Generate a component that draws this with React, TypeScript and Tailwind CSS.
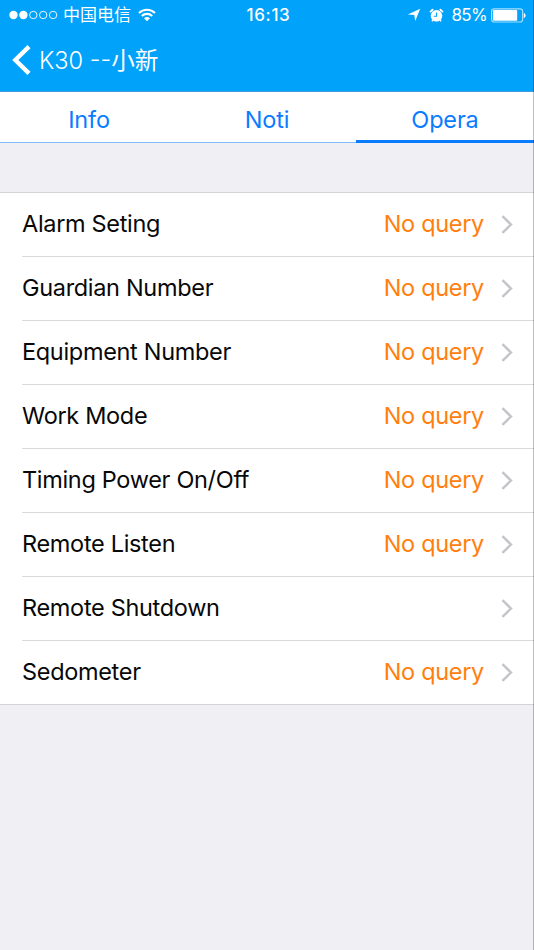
const rows = [
  { label: 'Alarm Seting', value: 'No query' },
  { label: 'Guardian Number', value: 'No query' },
  { label: 'Equipment Number', value: 'No query' },
  { label: 'Work Mode', value: 'No query' },
  { label: 'Timing Power On/Off', value: 'No query' },
  { label: 'Remote Listen', value: 'No query' },
  { label: 'Remote Shutdown', value: '' },
  { label: 'Sedometer', value: 'No query' },
];

const tabs = ['Info', 'Noti', 'Opera'];

function StatusBar() {
  return (
    <div className="grid h-[30px] grid-cols-[1fr_auto_1fr] items-center pl-[9px] pr-[8px]">
      <div className="flex items-center">
        <svg width="50" height="10" viewBox="0 0 50 10" fill="none" stroke="white">
          <circle cx="4.5" cy="5" r="4.2" fill="white" stroke="none" />
          <circle cx="14.4" cy="5" r="4.2" fill="white" stroke="none" />
          <circle cx="24.3" cy="5" r="3.7" strokeWidth="0.9" />
          <circle cx="34.2" cy="5" r="3.7" strokeWidth="0.9" />
          <circle cx="44.1" cy="5" r="3.7" strokeWidth="0.9" />
        </svg>
        <span className="ml-[4px] text-[17px] leading-[30px]">中国电信</span>
        <svg className="ml-[7px]" width="18" height="14" viewBox="0 0 18 14" fill="none" stroke="white" strokeWidth="2.1">
          <path d="M1 5.1a11.4 11.4 0 0 1 16 0" />
          <path d="M3.8 8.1a7.3 7.3 0 0 1 10.4 0" />
          <path d="M9 13.2 6 10.3a4.2 4.2 0 0 1 6 0Z" fill="white" stroke="none" />
        </svg>
      </div>
      <span className="pl-[2px] text-[17px] font-medium leading-[30px] tracking-[0.65px]">16:13</span>
      <div className="flex items-center justify-end">
        <svg width="14" height="14" viewBox="0 0 14 14" fill="white">
          <path d="M13.2.8 8.2 13 7.3 6.9.8 6.5Z" />
        </svg>
        <svg className="ml-[8px]" width="15" height="15" viewBox="0 0 15 15">
          <path d="M1.5 3.6 3.6 1.7M11.4 1.7l2.1 1.9" stroke="white" strokeWidth="1.9" strokeLinecap="round" />
          <circle cx="7.5" cy="7.8" r="5.8" fill="white" />
          <path d="M7.6 4.4v3.9H4.8" fill="none" stroke="#00a2fa" strokeWidth="1.1" />
          <path d="m3.9 12-1 1.4M11.1 12l1 1.4" stroke="white" strokeWidth="1.3" />
        </svg>
        <span className="ml-[8px] text-[17px] leading-[30px] tracking-[-0.7px]">85%</span>
        <svg className="ml-[4px] -mr-px" width="36" height="15" viewBox="0 0 36 15">
          <rect x="0.6" y="0.8" width="31" height="13.2" rx="2.5" fill="none" stroke="white" strokeOpacity="0.65" strokeWidth="1.2" />
          <rect x="2" y="2.1" width="24.2" height="10.6" rx="1" fill="white" />
          <path d="M32.8 5c2.4.6 2.4 4.4 0 5Z" fill="white" />
        </svg>
      </div>
    </div>
  );
}

function Chevron() {
  return (
    <svg className="ml-[17px]" width="12" height="19" viewBox="0 0 12 19" fill="none" stroke="#c4c4c9" strokeWidth="2.4">
      <path d="m1.4 1.2 8.6 8.3-8.6 8.3" />
    </svg>
  );
}

export default function App() {
  return (
    <div className="relative h-[950px] w-[534px] overflow-hidden bg-[#efeff4] font-['Inter','Noto_Sans_CJK_SC',sans-serif]">
      <header className="h-[92px] border-b border-[#3d9fe0] bg-[#00a2fa] text-white">
        <StatusBar />
        <div className="flex h-[60px] items-center pl-[12px]">
          <svg width="20" height="30" viewBox="0 0 20 30" fill="none" stroke="white" strokeWidth="4.4">
            <path d="M17 1.7 3.3 15 17 28.3" />
          </svg>
          <h1 className="ml-[7px] whitespace-nowrap pt-[2px] text-[23.6px] font-light leading-[58px]">
            K30 --<span className="font-normal">小新</span>
          </h1>
        </div>
      </header>
      <nav className="grid h-[51px] grid-cols-3 bg-white text-[#0a7cff]">
        {tabs.map((tab) => (
          <button
            key={tab}
            className={`flex h-[51px] justify-center pt-[8px] text-[23.5px] leading-[40px] tracking-[-0.15px] ${
              tab === 'Opera' ? 'border-b-[3px] border-[#0a7cff]' : 'border-b border-[#7dbcff]'
            }`}
          >
            {tab}
          </button>
        ))}
      </nav>
      <main className="mt-[49px] border-y border-[#d4d4d8] bg-white">
        {rows.map((row, index) => (
          <div key={row.label} className="pl-[22px]">
            <div
              className={`flex items-center pr-[21px] text-[23.5px] leading-[60px] tracking-[-0.32px] ${
                index < rows.length - 1 ? 'h-[64px] border-b border-[#d9d9dc]' : 'h-[63px]'
              }`}
            >
              <span className="flex-1 pb-[2px] text-[#080808]">{row.label}</span>
              <span className="pb-[2px] text-[#ff7f0e]">{row.value}</span>
              <Chevron />
            </div>
          </div>
        ))}
      </main>
      <div className="absolute inset-y-0 right-0 w-px bg-black/25" />
    </div>
  );
}
